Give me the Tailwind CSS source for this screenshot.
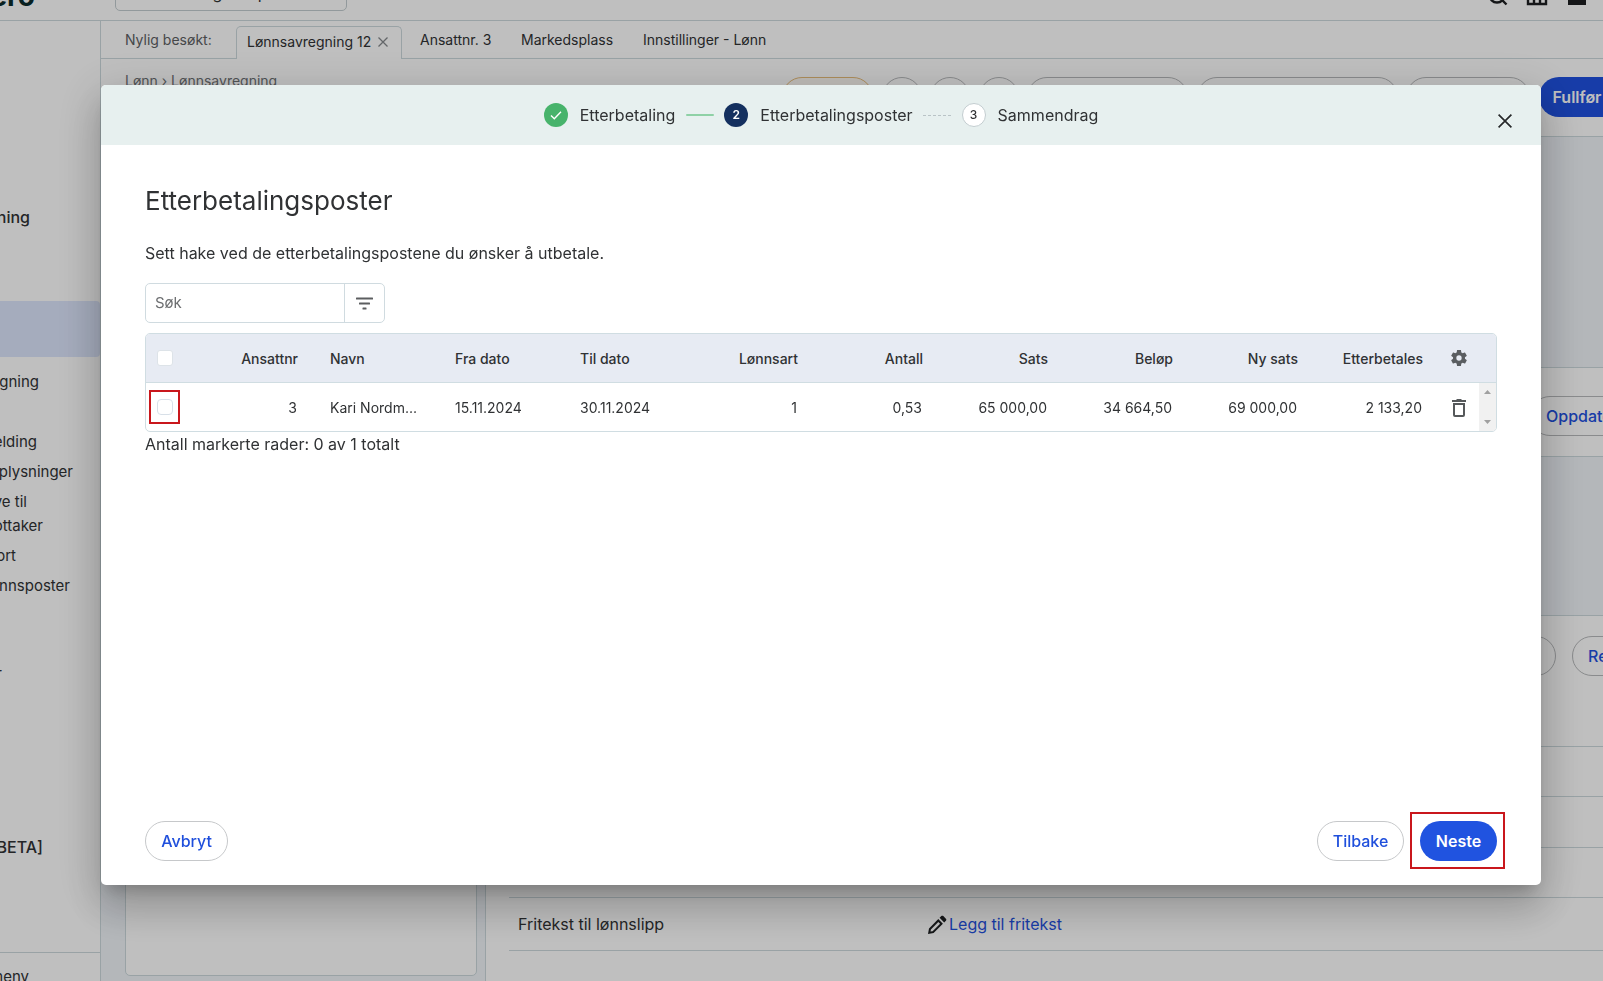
<!DOCTYPE html>
<html lang="no">
  <head>
    <meta charset="UTF-8" />
    <meta name="viewport" content="width=device-width, initial-scale=1.0" />
    <title>Etterbetalingsposter</title>
    <script src="https://cdn.jsdelivr.net/npm/@tailwindcss/browser@4"></script>
  </head>
  <body class="h-screen overflow-hidden bg-white font-['Inter',sans-serif] text-base text-[#303234]">
    <!-- Page behind the dialog -->
    <div class="flex h-[981px] w-[1603px] flex-col overflow-hidden">
      <header class="flex h-[21px] shrink-0 items-end overflow-hidden border-b border-[#ccd9dd]">
        <div class="flex h-[60px] w-[35px] shrink-0 items-end justify-end pb-[10px] text-[28px] leading-none font-bold text-[#0b2b2b]">ero</div>
        <div class="mb-[9px] ml-20 flex h-10 w-[232px] shrink-0 items-center rounded-[5px] border border-[#c3cdd0] pl-4 text-base">
          <span class="pt-[3px] pl-[12px]">Demo Regnskap</span>
        </div>
        <div class="ml-auto flex h-[60px] items-end gap-4 pr-[14px] pb-[13px] text-[#1c1e20]">
          <svg class="size-6" viewBox="0 0 24 24" fill="none" stroke="currentColor" stroke-width="2.4"><circle cx="12" cy="12" r="7.5" /><path d="M17 17l4.500 4.500" /></svg>
          <svg class="size-6" viewBox="0 0 24 24" fill="none" stroke="currentColor" stroke-width="2.4"><path d="M3 5h18v16H3zM9 5v16M15 5v16M3 15h18" /></svg>
          <svg class="size-6" viewBox="0 0 24 24" fill="currentColor"><path d="M3 5h18v17H3z" /></svg>
        </div>
      </header>

      <div class="flex min-h-0 grow">
        <aside class="flex w-[101px] shrink-0 flex-col items-start overflow-hidden border-r border-[#ccd9dd] text-[15px] leading-6 whitespace-nowrap">
          <div class="mt-[184px] flex w-[30px] justify-end text-base font-medium">ning</div>
          <div class="mt-[72px] h-14 w-full shrink-0 rounded-r-[4px] bg-[#dde6fc]"></div>
          <div class="mt-[13px] flex w-[39px] justify-end">gning</div>
          <div class="mt-9 flex w-[37px] justify-end">elding</div>
          <div class="mt-1.5 flex w-[73px] justify-end">plysninger</div>
          <div class="mt-1.5 flex w-[27px] justify-end">ve til</div>
          <div class="flex w-[43px] justify-end">ottaker</div>
          <div class="mt-1.5 flex w-4 justify-end">ort</div>
          <div class="mt-1.5 flex w-[70px] justify-end">nnsposter</div>
          <div class="mt-[64px] flex w-0.5 justify-end">r</div>
          <div class="mt-[149px] flex w-[43px] justify-end text-base font-medium">BETA]</div>
          <div class="mt-[93px] flex w-full shrink-0 border-t border-[#ccd9dd] pt-3">
            <div class="flex w-[29px] justify-end">meny</div>
          </div>
        </aside>

        <div class="flex min-w-0 grow flex-col bg-[#f0f4f9] whitespace-nowrap">
          <nav class="flex h-[38px] shrink-0 border-b border-[#ccd9dd] bg-white text-sm">
            <span class="w-[135px] pt-[9px] pl-6 text-[#5c6063]">Nylig besøkt:</span>
            <div class="-mb-px flex h-[33px] w-[166px] translate-y-[5px] items-center justify-between rounded-t-[5px] border border-b-0 border-[#ccd9dd] bg-white pr-[13px] pb-[3px] pl-2.5">
              <span>Lønnsavregning 12</span>
              <svg class="size-2.5 text-[#85898c]" viewBox="0 0 10 10" fill="none" stroke="currentColor" stroke-width="1.3"><path d="M.5.5l9 9M9.500.5l-9 9" /></svg>
            </div>
            <span class="w-[119px] pt-[9px] pl-[18px]">Ansattnr. 3</span>
            <span class="w-[122px] pt-[9px]">Markedsplass</span>
            <span class="pt-[9px]">Innstillinger - Lønn</span>
          </nav>

          <div class="flex h-[78px] shrink-0 items-start border-b border-[#ccd9dd] bg-white">
            <div class="w-[681px] shrink-0 pt-3 pl-6 text-sm text-[#6c7073]">Lønn › Lønnsavregning</div>
            <div class="mt-[18px] flex shrink-0 gap-[8.5px] text-[#b8babc]">
              <div class="h-10 w-[91px] rounded-full border border-[#e8bd7a] bg-[#fff6e6]/40"></div>
              <div class="size-10 rounded-full border"></div>
              <div class="size-10 rounded-full border"></div>
              <div class="size-10 rounded-full border"></div>
              <div class="h-10 w-[161px] rounded-full border"></div>
              <div class="h-10 w-[201px] rounded-full border"></div>
              <div class="h-10 w-[124px] rounded-full border"></div>
              <div class="flex h-10 w-[120px] items-center rounded-full bg-[#1f51e0] pl-[14px] text-base font-semibold text-white">Fullfør</div>
            </div>
          </div>

          <div class="h-[230px] shrink-0"></div>
          <div class="flex h-[90px] shrink-0 items-start border-y border-[#ccd9dd] bg-white pt-7 pl-[1429px]">
            <div class="flex h-10 w-[120px] shrink-0 items-center rounded-full border border-[#b8babc] pl-[15px] font-medium text-[#1f51e0]">Oppdater</div>
          </div>
          <div class="h-[158px] shrink-0"></div>

          <div class="flex min-h-0 grow">
            <div class="flex w-[384px] shrink-0 flex-col border-t border-[#ccd9dd] pr-2 pl-6">
              <div class="h-[360px] rounded-b-[5px] border border-[#ccd9dd] bg-white"></div>
            </div>
            <div class="flex min-w-0 grow flex-col border-t border-l border-[#ccd9dd] bg-white pl-[23px]">
              <div class="flex h-[131px] shrink-0 gap-4 border-b border-[#ccd9dd] pt-5 pl-[927px]">
                <div class="h-10 w-[120px] shrink-0 rounded-full border border-[#b8babc]"></div>
                <div class="flex h-10 w-[120px] shrink-0 items-center rounded-full border border-[#b8babc] pl-[15px] font-medium text-[#1f51e0]">Rediger</div>
              </div>
              <div class="h-[50px] shrink-0 border-b border-[#ccd9dd]"></div>
              <div class="h-[51px] shrink-0 border-b border-[#ccd9dd]"></div>
              <div class="h-[50px] shrink-0 border-b border-[#ccd9dd]"></div>
              <div class="flex h-[53px] shrink-0 items-center border-b border-[#ccd9dd] pl-[9px]">
                <span class="w-[407px]">Fritekst til lønnslipp</span>
                <svg class="mt-0.5 size-6 text-[#1c1e20]" viewBox="0 0 24 24" fill="currentColor"><path fill-rule="evenodd" d="M13.300 6.100L4 15.400 3 21l5.600-1 9.300-9.300zM13.300 8.900l1.800 1.800-7.500 7.500-2.100.4.400-2.100zM14.600 4.800l1.700-1.700c.6-.6 1.400-.6 2 0l2.600 2.600c.6.600.6 1.400 0 2l-1.700 1.700z" /></svg>
                <span class="text-[#1f51e0]">Legg til fritekst</span>
              </div>
            </div>
          </div>
        </div>
      </div>
    </div>

    <!-- Backdrop and dialog -->
    <div class="fixed inset-0 bg-black/25">
      <div class="mt-[85px] ml-[101px] flex h-[800px] w-[1440px] flex-col overflow-hidden rounded-[5px] bg-white shadow-[0_11px_15px_-7px_rgba(0,0,0,0.2),0_24px_38px_3px_rgba(0,0,0,0.14),0_9px_46px_8px_rgba(0,0,0,0.12)]">
        <div class="relative flex h-[60px] shrink-0 items-center justify-center bg-[#e7f0ef]">
          <div class="flex size-6 items-center justify-center rounded-full bg-[#47b36b]">
            <svg class="size-3" viewBox="0 0 12 12" fill="none" stroke="white" stroke-width="1.4"><path d="M1 6.500l3.300 3.200L11 2.800" /></svg>
          </div>
          <span class="ml-3">Etterbetaling</span>
          <div class="mx-[10.500px] h-0.5 w-[28px] rounded bg-[#8fd1a6]"></div>
          <div class="flex size-6 items-center justify-center rounded-full bg-[#14305f] text-xs font-semibold text-white">2</div>
          <span class="ml-3">Etterbetalingsposter</span>
          <div class="mx-[10.500px] w-[28px] border-t border-dashed border-[#b9c3c6]"></div>
          <div class="flex size-6 items-center justify-center rounded-full border border-[#c3cdd0] bg-white text-xs font-medium">3</div>
          <span class="ml-3">Sammendrag</span>
          <svg class="absolute top-[29px] right-[29px] size-3.5" viewBox="0 0 14 14" fill="none" stroke="#26282a" stroke-width="1.7"><path d="M.6.6l12.800 12.800M13.400.6L.6 13.400" /></svg>
        </div>

        <div class="flex grow flex-col px-11">
          <h1 class="mt-10 text-[26px] leading-8">Etterbetalingsposter</h1>
          <p class="mt-6 leading-6">Sett hake ved de etterbetalingspostene du ønsker å utbetale.</p>

          <div class="mt-[18px] flex h-10 w-60 shrink-0 rounded-[5px] border border-[#d0dbe0]">
            <div class="flex w-[199px] items-center border-r border-[#d0dbe0] pl-[9px] text-[15px] text-[#6c6e70]">Søk</div>
            <div class="flex grow items-center justify-center">
              <svg class="h-[13px] w-[17px] text-[#5c5e60]" viewBox="0 0 17 13" fill="currentColor"><rect width="17" height="2" y=".5" rx=".5" /><rect x="3" y="5.500" width="11" height="2" rx=".5" /><rect x="6.500" y="10.500" width="4" height="2" rx=".5" /></svg>
            </div>
          </div>

          <div class="mt-2.5 h-[99px] w-[1352px] shrink-0 overflow-hidden rounded-[5px] border border-[#d0dde2] text-sm">
            <div class="grid h-[49px] grid-cols-[43px_repeat(10,125px)_1fr] items-center border-b border-[#d0dde2] bg-[#e7ebf3] font-medium">
              <div class="pl-[11px]"><div class="size-4 rounded-[3px] border border-[#dde3e8] bg-white"></div></div>
              <div class="px-4 pt-px text-right">Ansattnr</div>
              <div class="px-4 pt-px">Navn</div>
              <div class="px-4 pt-px">Fra dato</div>
              <div class="px-4 pt-px">Til dato</div>
              <div class="px-4 pt-px text-right">Lønnsart</div>
              <div class="px-4 pt-px text-right">Antall</div>
              <div class="px-4 pt-px text-right">Sats</div>
              <div class="px-4 pt-px text-right">Beløp</div>
              <div class="px-4 pt-px text-right">Ny sats</div>
              <div class="px-4 pt-px text-right">Etterbetales</div>
              <div class="pl-2.5">
                <svg class="size-5 text-[#5a5d60]" viewBox="0 0 24 24" fill="currentColor"><path d="M19.140 12.940c.04-.3.060-.61.060-.94 0-.32-.02-.64-.07-.94l2.030-1.580c.18-.14.230-.41.120-.61l-1.920-3.320c-.12-.22-.37-.29-.59-.22l-2.390.96c-.5-.38-1.030-.7-1.620-.94l-.36-2.540c-.04-.24-.24-.41-.48-.41h-3.840c-.24 0-.43.170-.47.410l-.36 2.540c-.59.240-1.130.570-1.620.940l-2.390-.96c-.22-.08-.47 0-.59.220L2.740 8.870c-.12.210-.08.470.120.610l2.030 1.580c-.05.300-.09.630-.09.940s.02.640.070.940l-2.030 1.580c-.18.140-.23.410-.12.610l1.920 3.320c.12.220.370.290.590.220l2.390-.96c.5.380 1.030.7 1.620.940l.36 2.540c.05.240.240.410.480.410h3.840c.24 0 .44-.17.470-.41l.36-2.540c.59-.24 1.130-.56 1.620-.94l2.390.96c.22.080.470 0 .59-.22l1.920-3.320c.12-.22.070-.47-.12-.61l-2.010-1.580zM12 15.200a3.200 3.200 0 1 1 0-6.400 3.200 3.200 0 0 1 0 6.400z" /></svg>
              </div>
            </div>
            <div class="grid h-12 grid-cols-[43px_repeat(10,125px)_1fr] items-center">
              <div class="relative pl-[11px]">
                <div class="size-4 rounded-[4px] border-[1.500px] border-[#d8e0e8] bg-white"></div>
                <!-- highlight frame -->
                <div class="absolute -top-[9px] left-[3px] h-[34px] w-[31px] border-2 border-[#c9171c]"></div>
              </div>
              <div class="px-[17px] pt-0.5 text-right">3</div>
              <div class="px-4 pt-0.5">Kari Nordm...</div>
              <div class="px-4 pt-0.5">15.11.2024</div>
              <div class="px-4 pt-0.5">30.11.2024</div>
              <div class="px-[17px] pt-0.5 text-right">1</div>
              <div class="px-[17px] pt-0.5 text-right">0,53</div>
              <div class="px-[17px] pt-0.5 text-right">65 000,00</div>
              <div class="px-[17px] pt-0.5 text-right">34 664,50</div>
              <div class="px-[17px] pt-0.5 text-right">69 000,00</div>
              <div class="px-[17px] pt-0.5 text-right">2 133,20</div>
              <div class="flex h-full items-center justify-between pl-[13px]">
                <svg class="mt-0.5 h-[18px] w-3.5 text-[#55585a]" viewBox="0 0 14 18" fill="currentColor"><path d="M0 1h4l1-1h4l1 1h4v2H0zM1 4h12v12a2 2 0 0 1-2 2H3a2 2 0 0 1-2-2zM3 6v10h8V6z" fill-rule="evenodd" /></svg>
                <div class="flex h-full w-[17px] flex-col items-center justify-between bg-[#f1f1f1] py-[7px] text-[#a0a0a0]">
                  <svg class="h-1 w-[7px]" viewBox="0 0 7 4" fill="currentColor"><path d="M3.500 0L7 4H0z" /></svg>
                  <svg class="h-1 w-[7px]" viewBox="0 0 7 4" fill="currentColor"><path d="M0 0h7L3.500 4z" /></svg>
                </div>
              </div>
            </div>
          </div>
          <p class="leading-6">Antall markerte rader: 0 av 1 totalt</p>

          <div class="mt-auto mb-6 flex items-center font-medium text-[#1f4fdc]">
            <button class="h-10 w-[83px] rounded-full border border-[#c6c8ca]">Avbryt</button>
            <button class="ml-auto h-10 w-[87px] rounded-full border border-[#c6c8ca]">Tilbake</button>
            <div class="relative ml-4">
              <button class="h-10 w-[77px] rounded-full bg-[#2053e0] font-semibold text-white">Neste</button>
              <div class="absolute -top-[9px] -left-2.5 h-[57px] w-[95px] border-2 border-[#c9171c]"></div>
            </div>
          </div>
        </div>
      </div>
    </div>
  </body>
</html>
